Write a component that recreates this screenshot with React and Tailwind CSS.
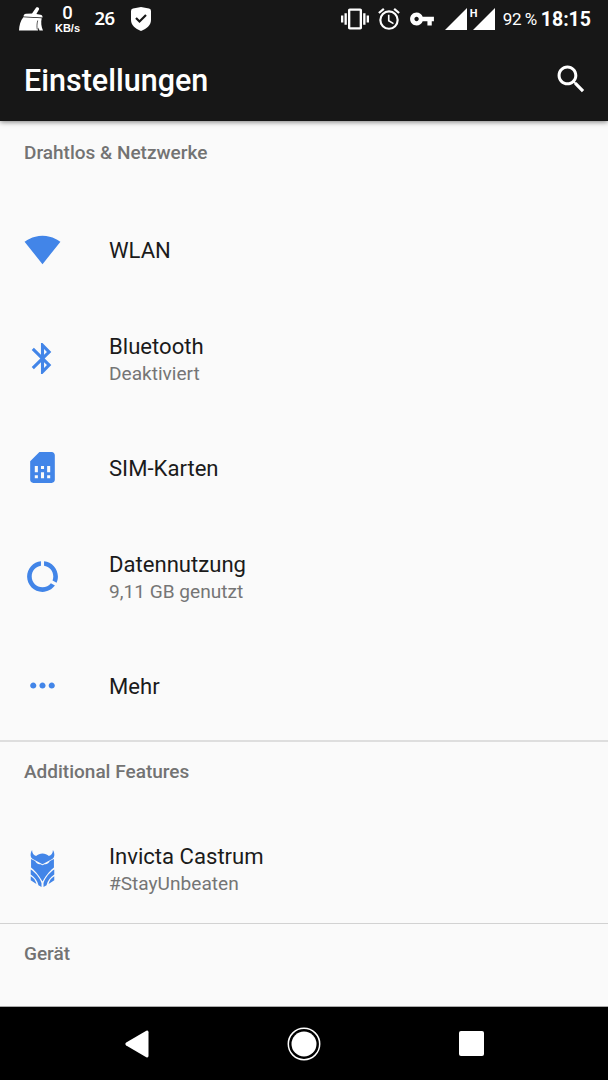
const icons = {
  wifi: "M12.01 21.49L23.64 7c-.45-.34-4.93-4-11.64-4C5.28 3 .81 6.66.36 7l11.63 14.49.01.01.01-.01z",
  bluetooth:
    "M17.71 7.71L12 2h-1v7.59L6.41 5 5 6.41 10.59 12 5 17.59 6.41 19 11 14.41V22h1l5.71-5.71-4.3-4.29 4.3-4.29zM13 5.83l1.88 1.88L13 9.59V5.83zm1.88 10.46L13 18.17v-3.76l1.88 1.88z",
  sim: "M19.99 4c0-1.1-.89-2-1.99-2h-8L4 8v12c0 1.1.9 2 2 2h12.01c1.1 0 1.99-.9 1.99-2l-.01-16zM9 19H7v-2h2v2zm8 0h-2v-2h2v2zm-8-4H7v-4h2v4zm4 4h-2v-4h2v4zm0-6h-2v-2h2v2zm4 2h-2v-4h2v4z",
  data: "M13 2.05v3.03c3.39.49 6 3.39 6 6.92 0 .9-.18 1.75-.48 2.54l2.6 1.53c.56-1.24.88-2.62.88-4.07 0-5.18-3.95-9.45-9-9.95zM12 19c-3.87 0-7-3.13-7-7 0-3.53 2.61-6.43 6-6.92V2.05c-5.06.5-9 4.76-9 9.95 0 5.52 4.47 10 9.99 10 3.31 0 6.24-1.61 8.06-4.09l-2.6-1.53C16.17 17.98 14.21 19 12 19z",
  more: "M6 10c-1.1 0-2 .9-2 2s.9 2 2 2 2-.9 2-2-.9-2-2-2zm12 0c-1.1 0-2 .9-2 2s.9 2 2 2 2-.9 2-2-.9-2-2-2zm-6 0c-1.1 0-2 .9-2 2s.9 2 2 2 2-.9 2-2-.9-2-2-2z",
  search:
    "M15.5 14h-.79l-.28-.27C15.41 12.59 16 11.11 16 9.5 16 5.91 13.09 3 9.5 3S3 5.91 3 9.5 5.91 16 9.5 16c1.61 0 3.09-.59 4.23-1.57l.27.28v.79l5 4.99L20.49 19l-4.99-5zm-6 0C7.01 14 5 11.99 5 9.5S7.01 5 9.5 5 14 7.01 14 9.5 11.99 14 9.5 14z",
  vibration:
    "M0 15h2V9H0v6zm3 2h2V7H3v10zm19-8v6h2V9h-2zm-3 8h2V7h-2v10zM16.5 3h-9C6.67 3 6 3.67 6 4.5v15c0 .83.67 1.5 1.5 1.5h9c.83 0 1.5-.67 1.5-1.5v-15c0-.83-.67-1.5-1.5-1.5zM16 19H8V5h8v14z",
  alarm:
    "M22 5.72l-4.6-3.86-1.29 1.53 4.6 3.86L22 5.72zM7.88 3.39L6.6 1.86 2 5.71l1.29 1.53 4.59-3.85zM12.5 8H11v6l4.75 2.85.75-1.23-4-2.37V8zM12 4a9 9 0 1 0 0 18 9 9 0 0 0 0-18zm0 16a7 7 0 1 1 0-14 7 7 0 0 1 0 14z",
  key: "M12.65 10C11.83 7.67 9.61 6 7 6c-3.31 0-6 2.69-6 6s2.69 6 6 6c2.61 0 4.83-1.67 5.65-4H17v4h4v-4h2v-4H12.65zM7 14c-1.1 0-2-.9-2-2s.9-2 2-2 2 .9 2 2-.9 2-2 2z",
};

function Icon({ name, className }) {
  return (
    <svg viewBox="0 0 24 24" fill="currentColor" className={className}>
      <path d={icons[name]} />
    </svg>
  );
}

function Owl({ className }) {
  return (
    <svg viewBox="0 0 72 110" fill="currentColor" className={className}>
      <path d="M5 0C-1 10 -1 22 7 27L36 42L65 27C73 22 73 10 67 0C67 10 62 15 55 18C45 8 27 8 17 18C10 15 5 10 5 0Z" />
      <path d="M2 27L14 33C17 40 23 43 30 42L36 45L42 42C49 43 55 40 58 33L70 27V52C62 58 48 72 36 94C24 72 10 58 2 52Z" />
      <path d="M1 58C14 66 27 81 33 98V110L24 105C21 91 13 81 1 73Z" />
      <path d="M71 58C58 66 45 81 39 98V110L48 105C51 91 59 81 71 73Z" />
      <path d="M1 78C10 83 15 90 18 101L1 90ZM71 78C62 83 57 90 54 101L71 90Z" />
    </svg>
  );
}

function Signal() {
  return (
    <svg viewBox="0 0 22 22" fill="currentColor" className="size-[22px]">
      <path d="M22 0V22H0Z" />
    </svg>
  );
}

function StatusBar() {
  return (
    <div className="flex h-[37px] items-center pr-[17px] pl-[19px] text-white">
      <svg viewBox="0 0 24 24" fill="currentColor" className="size-6">
        <path d="M17 .8c1.200-1.200 3.800 0 3 1.800L17.400 7 21.500 7.800c1.500.4 2.200 1.400 2 2.600L4.500 9.400c.2-1.700 1-2.500 2.500-2.600l6-.2Z" />
        <path d="M4.300 10.200 22.700 11.300c-.9 4.200-.5 8.200 1.300 12.300h-3.600l-.8-3.200-.7 3.200H0C.2 18 1.500 13.700 4.300 10.200Z" />
        <path d="M18.700 13.500c-.8 3.500-1 6-.4 9" fill="none" stroke="#171717" strokeWidth=".7" />
      </svg>
      <div className="ml-[11px] flex w-[27px] flex-col items-center pt-px">
        <span className="font-['Roboto',sans-serif] text-[18.500px] leading-[17px] font-medium">0</span>
        <span className="font-['Liberation_Sans',sans-serif] text-[11px] leading-[12px] font-bold">KB/s</span>
      </div>
      <span className="ml-[13.500px] w-[21.500px] font-['Noto_Sans',sans-serif] text-[18.500px] leading-none font-semibold tracking-[-0.5px]">26</span>
      <svg viewBox="0 0 22 24" className="ml-[14px] h-6 w-[22px]">
        <path d="M3 1.500 11 0l8 1.500q2 .4 2 2.500v9c0 5-4 8.500-10 11C5 21.500 1 18 1 13V4q0-2.100 2-2.500Z" fill="white" />
        <path d="m6 11 3.500 3.500L16 8" fill="none" stroke="#171717" strokeWidth="2.200" />
      </svg>

      <div className="ml-auto flex items-center font-['Roboto',sans-serif]">
        <Icon name="vibration" className="size-7" />
        <Icon name="alarm" className="ml-[7px] size-[26px]" />
        <Icon name="key" className="ml-[7px] size-[26px]" />
        <div className="ml-[10px] flex gap-[6px]">
          <Signal />
          <div className="relative">
            <Signal />
            <span className="absolute top-0 -left-[3px] text-[11px] leading-none font-bold">H</span>
          </div>
        </div>
        <span className="ml-2 w-[34px] pt-0.5 text-[17px] leading-none tracking-tight whitespace-nowrap">92 %</span>
        <span className="ml-1 pt-0.5 text-[19.500px] leading-none font-bold">18:15</span>
      </div>
    </div>
  );
}

const sections = [
  {
    title: "Drahtlos & Netzwerke",
    headingClass: "h-[73px] pt-[18px]",
    items: [
      { icon: "wifi", label: "WLAN" },
      { icon: "bluetooth", label: "Bluetooth", summary: "Deaktiviert" },
      { icon: "sim", label: "SIM-Karten" },
      { icon: "data", label: "Datennutzung", summary: "9,11 GB genutzt" },
      { icon: "more", label: "Mehr" },
    ],
  },
  {
    title: "Additional Features",
    className: "border-t-2 border-[#dedede] pb-px",
    headingClass: "h-[71px] pt-[16px]",
    items: [{ icon: "owl", label: "Invicta Castrum", summary: "#StayUnbeaten" }],
  },
  {
    title: "Gerät",
    className: "border-t border-[#d2d2d2]",
    headingClass: "h-[71px] pt-[16px]",
    items: [],
  },
];

function Row({ icon, label, summary }) {
  return (
    <li className="flex h-[109.200px] items-center pl-6">
      <div className="flex w-[85px] pt-px">
        {icon === "owl" ? (
          <Owl className="ml-[6px] h-[37px] w-[25px]" />
        ) : (
          <Icon name={icon} className="size-[37px]" />
        )}
      </div>
      <div className={summary ? "pt-[4px]" : "pt-[3px]"}>
        <div className="text-[22.100px] leading-[27px] text-[#1b1b1b]">{label}</div>
        {summary && <div className="text-[19.100px] leading-[27px] text-[#757575]">{summary}</div>}
      </div>
    </li>
  );
}

export default function App() {
  return (
    <div className="flex h-[1080px] w-[608px] flex-col overflow-hidden bg-[#fafafa] font-['Roboto',sans-serif]">
      <header className="z-10 h-[121px] shrink-0 bg-[#171717] text-white shadow-[0_1px_5px_rgba(0,0,0,0.5)]">
        <StatusBar />
        <div className="flex h-[84px] items-center justify-between pr-[19px] pl-6">
          <h1 className="pt-[5px] text-[30.500px] leading-none font-medium">Einstellungen</h1>
          <Icon name="search" className="size-[36.500px]" />
        </div>
      </header>

      <main className="min-h-0 flex-1 overflow-hidden">
        {sections.map((s) => (
          <section key={s.title} className={s.className}>
            <h2 className={`pl-6 text-[19px] leading-[28px] font-medium text-[#737373] ${s.headingClass}`}>{s.title}</h2>
            <ul className="text-[#4285e8]">
              {s.items.map((item) => (
                <Row key={item.label} {...item} />
              ))}
            </ul>
          </section>
        ))}
      </main>

      <nav className="flex h-[74px] shrink-0 items-center gap-[138px] border-t border-[#aaa] bg-black pl-[125px] text-white">
        <svg viewBox="0 0 24 28" className="h-7 w-6" fill="currentColor">
          <path d="M1.200 12.500 21.300.800Q23.500 0 23.500 2.300v23.400q0 2.300-2.200 1.500L1.200 15.500Q-.5 14 1.200 12.500Z" />
        </svg>
        <svg viewBox="0 0 34 34" className="size-[34px]" fill="currentColor">
          <circle cx="17" cy="17" r="12.500" />
          <circle cx="17" cy="17" r="15.700" fill="none" stroke="currentColor" strokeWidth="1.500" />
        </svg>
        <div className="size-[25px] rounded-[2px] bg-white" />
      </nav>
    </div>
  );
}
